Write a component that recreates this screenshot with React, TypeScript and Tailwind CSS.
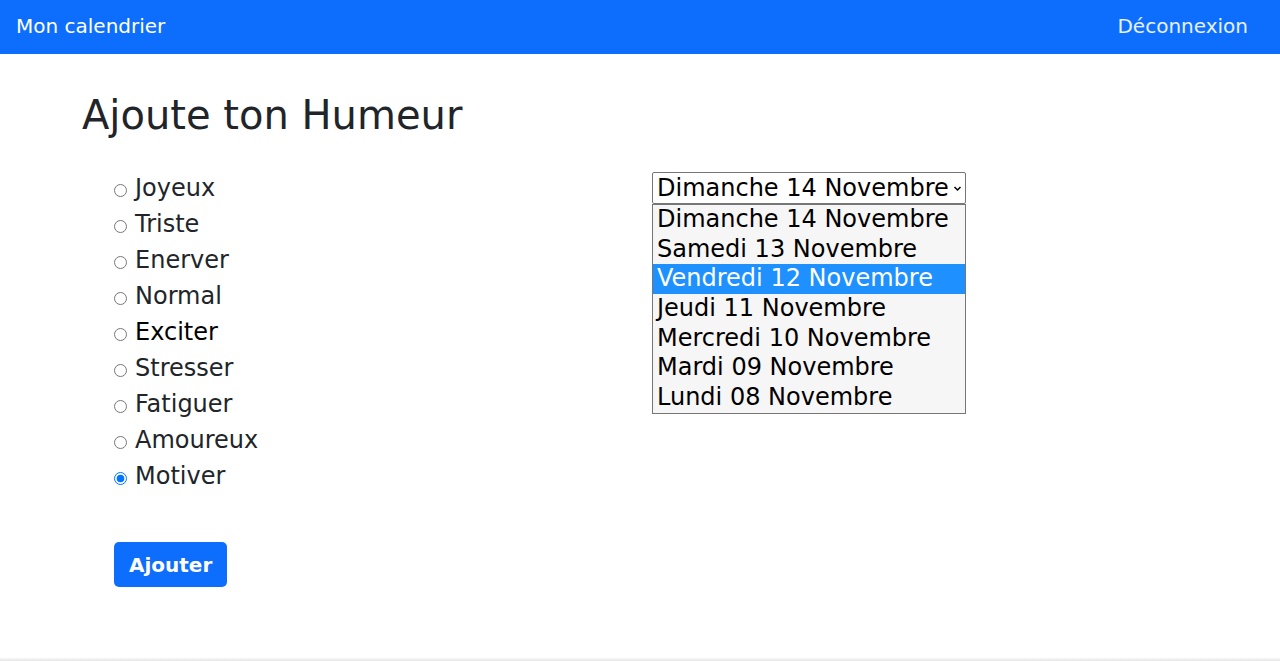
import React from 'react';

const moods = ['Joyeux', 'Triste', 'Enerver', 'Normal', 'Exciter', 'Stresser', 'Fatiguer', 'Amoureux', 'Motiver'];

const days = [
  'Dimanche 14 Novembre',
  'Samedi 13 Novembre',
  'Vendredi 12 Novembre',
  'Jeudi 11 Novembre',
  'Mercredi 10 Novembre',
  'Mardi 09 Novembre',
  'Lundi 08 Novembre',
];

function Radio({ checked }: { checked: boolean }) {
  // dessin du bouton radio natif de Chrome
  return (
    <svg width="13" height="13" viewBox="0 0 13 13" className="mt-[14px] shrink-0">
      {checked ? (
        <>
          <circle cx="6.5" cy="6.5" r="6" fill="#fff" stroke="#0075ff" strokeWidth="1" />
          <circle cx="6.5" cy="6.5" r="3.8" fill="#0075ff" />
        </>
      ) : (
        <circle cx="6.5" cy="6.5" r="6" fill="#fff" stroke="#767676" strokeWidth="1" />
      )}
    </svg>
  );
}

export default function App() {
  const font = { fontFamily: '"DejaVu Sans", Verdana, sans-serif' };

  return (
    <div className="h-[661px] flex flex-col bg-white text-[#212529]" style={font}>
      {/* Navbar */}
      <nav className="h-[54px] shrink-0 bg-[#0d6efd] flex items-center justify-between pl-4 pr-8 pb-[2px] text-white text-[20px] leading-[30px]">
        <span className="text-white">Mon calendrier</span>
        <span className="text-white/90">Déconnexion</span>
      </nav>

      <main className="flex-1">
        <div className="w-[1140px] mx-auto px-3 pt-[37px]">
          <h1 className="text-[40px] leading-[48px] font-normal mb-[31px]">Ajoute ton Humeur</h1>

          <div className="grid grid-cols-[570px_1fr]">
            {/* Colonne humeurs */}
            <div className="pl-8">
              <div className="flex flex-col">
                {moods.map((m) => (
                  <label key={m} className="flex items-start gap-2 h-[36px] text-[24px] leading-[36px]">
                    <Radio checked={m === 'Motiver'} />
                    <span className={m === 'Exciter' ? 'text-black' : ''}>{m}</span>
                  </label>
                ))}
              </div>
              <button className="mt-[48px] h-[45px] px-[15px] rounded-[5px] bg-[#0d6efd] text-white font-bold text-[20px] leading-[30px]">
                Ajouter
              </button>
            </div>

            {/* Colonne date */}
            <div className="pt-[2px]">
              <div className="w-[314px] h-[32px] border border-[#767676] rounded-[2px] flex items-center pl-[4px] pr-[3px] text-black text-[24px] leading-[30px]">
                <span className="flex-1 whitespace-nowrap">Dimanche 14 Novembre</span>
                <svg width="9" height="9" viewBox="0 0 9 9" className="shrink-0">
                  <path d="M1.5 3 L4.5 6 L7.5 3" fill="none" stroke="#000" strokeWidth="1.5" />
                </svg>
              </div>
              <div className="w-[314px] border border-[#767676] bg-[#f6f6f6] text-black text-[24px]">
                {days.map((d) => (
                  <div
                    key={d}
                    className={
                      'h-[29.7px] leading-[29.7px] pl-[4px] whitespace-nowrap ' +
                      (d.startsWith('Vendredi') ? 'bg-[#1e90ff] text-white' : '')
                    }
                  >
                    {d}
                  </div>
                ))}
              </div>
            </div>
          </div>
        </div>
      </main>

      <div className="h-[3px] shrink-0 bg-gradient-to-b from-[#f7f7f7] to-[#e6e6e6]" />
    </div>
  );
}
